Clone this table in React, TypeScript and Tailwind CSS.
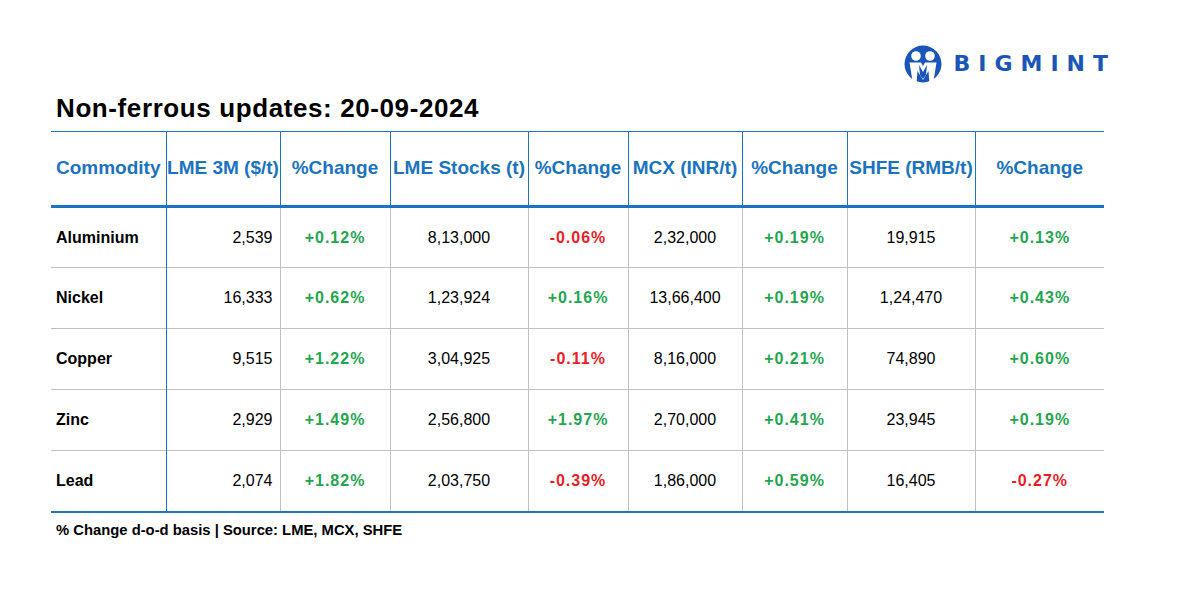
const rows = [
  { name: 'Aluminium', lme: '2,539', lmeC: '+0.12%', stk: '8,13,000', stkC: '-0.06%', mcx: '2,32,000', mcxC: '+0.19%', shfe: '19,915', shfeC: '+0.13%' },
  { name: 'Nickel', lme: '16,333', lmeC: '+0.62%', stk: '1,23,924', stkC: '+0.16%', mcx: '13,66,400', mcxC: '+0.19%', shfe: '1,24,470', shfeC: '+0.43%' },
  { name: 'Copper', lme: '9,515', lmeC: '+1.22%', stk: '3,04,925', stkC: '-0.11%', mcx: '8,16,000', mcxC: '+0.21%', shfe: '74,890', shfeC: '+0.60%' },
  { name: 'Zinc', lme: '2,929', lmeC: '+1.49%', stk: '2,56,800', stkC: '+1.97%', mcx: '2,70,000', mcxC: '+0.41%', shfe: '23,945', shfeC: '+0.19%' },
  { name: 'Lead', lme: '2,074', lmeC: '+1.82%', stk: '2,03,750', stkC: '-0.39%', mcx: '1,86,000', mcxC: '+0.59%', shfe: '16,405', shfeC: '-0.27%' },
]

const widths = [115, 114, 110, 138, 100, 114, 105, 128, 129]
const heads = ['Commodity', 'LME 3M ($/t)', '%Change', 'LME Stocks (t)', '%Change', 'MCX (INR/t)', '%Change', 'SHFE (RMB/t)', '%Change']

function Pct({ v }: { v: string }) {
  const up = v.startsWith('+')
  return (
    <span className={up ? 'text-[#1fa64f] font-bold tracking-[1px]' : 'text-[#ee1c24] font-bold tracking-[1px]'}>{v}</span>
  )
}

function Logo() {
  return (
    <div className="flex items-center gap-[9px]">
      <svg width="42" height="42" viewBox="0 0 42 42">
        <circle cx="21" cy="21" r="18.5" fill="#1a56b8" />
        <circle cx="14" cy="13" r="4.8" fill="#fff" />
        <circle cx="28" cy="13" r="4.8" fill="#fff" />
        <path d="M7.5 19.5 H19 L21 23 L23 19.5 H34.5 L31 41 H27.5 L26.5 28 L21 37 L15.5 28 L14.5 41 H11 Z" fill="#fff" />
        <path d="M17 22 L21 29 L25 22 L24 32 L21 36 L18 32 Z" fill="#1a56b8" />
      </svg>
      <span className="text-[22px] leading-none font-bold tracking-[8px] text-[#1a56b8] font-['DejaVu_Sans',sans-serif]">BIGMINT</span>
    </div>
  )
}

export default function App() {
  return (
    <div className="w-[1200px] h-[600px] bg-white font-['Liberation_Sans',Arial,sans-serif] text-black">
      <div className="ml-[51px] w-[1053px] pt-[43px]">
        <div className="flex justify-end -mr-[12px]">
          <Logo />
        </div>
        <h1 className="mt-[8px] ml-[5px] text-[26px] leading-[30px] font-bold tracking-[0.6px]">
          Non-ferrous updates: 20-09-2024
        </h1>
        <table className="mt-[8px] w-[1053px] table-fixed border-collapse">
          <colgroup>
            {widths.map((w, i) => (
              <col key={i} style={{ width: w }} />
            ))}
          </colgroup>
          <thead>
            <tr className="h-[75px] border-t border-[#1b74c1] border-b-[3px] border-b-[#1b74c1]">
              {heads.map((h, i) => (
                <th
                  key={i}
                  className={
                    (i === 0 ? 'text-left pl-[5px] ' : 'text-center px-0 ') +
                    (i < 8 ? 'border-r border-[#1b74c1] ' : '') +
                    'text-[19px] font-bold text-[#1a73c0] whitespace-nowrap'
                  }
                >
                  {h}
                </th>
              ))}
            </tr>
          </thead>
          <tbody className="text-[16px]">
            {rows.map((r, i) => (
              <tr
                key={r.name}
                className={
                  i === rows.length - 1
                    ? 'h-[61px] border-b-2 border-[#1b74c1]'
                    : 'h-[61px] border-b border-[#c0c0c0]'
                }
              >
                <td className="pl-[5px] font-bold border-r border-[#1b74c1]">{r.name}</td>
                <td className="text-right pr-[7px] border-r border-[#c0c0c0]">{r.lme}</td>
                <td className="text-center border-r border-[#c0c0c0]"><Pct v={r.lmeC} /></td>
                <td className="text-center border-r border-[#c0c0c0]">{r.stk}</td>
                <td className="text-center border-r border-[#c0c0c0]"><Pct v={r.stkC} /></td>
                <td className="text-center border-r border-[#c0c0c0]">{r.mcx}</td>
                <td className="text-center border-r border-[#c0c0c0]"><Pct v={r.mcxC} /></td>
                <td className="text-center border-r border-[#c0c0c0]">{r.shfe}</td>
                <td className="text-center"><Pct v={r.shfeC} /></td>
              </tr>
            ))}
          </tbody>
        </table>
        <p className="mt-[6px] ml-[5px] text-[14.8px] font-bold">% Change d-o-d basis | Source: LME, MCX, SHFE</p>
      </div>
    </div>
  )
}
